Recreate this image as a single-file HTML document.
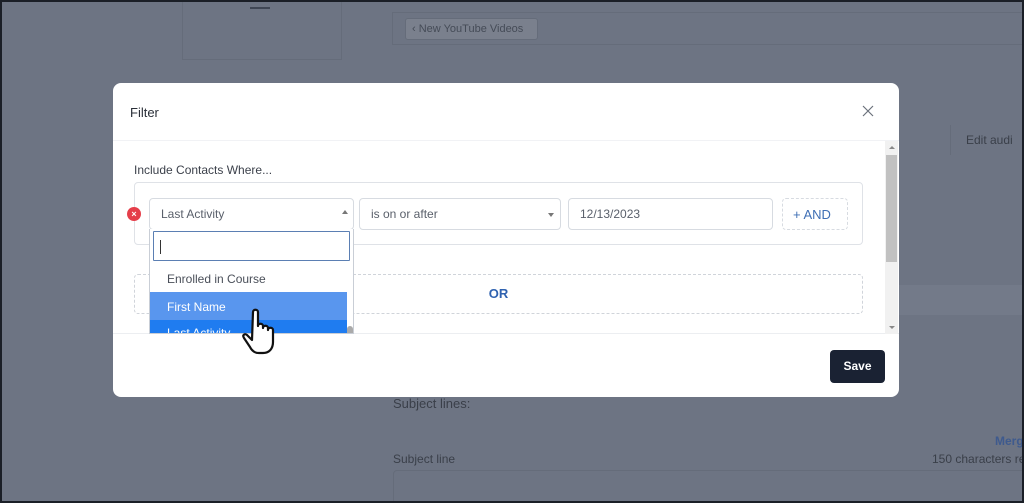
<!DOCTYPE html>
<html><head><style>
*{box-sizing:border-box;margin:0;padding:0}
html,body{width:1024px;height:503px;overflow:hidden}
body{background:#6d7483;font-family:"Liberation Sans",sans-serif;position:relative}
.frame{position:absolute;left:0;top:0;width:1024px;height:503px;border:2px solid #1b1f27;z-index:10;pointer-events:none}
.a{position:absolute;white-space:nowrap}
.t{position:absolute;color:#3a3f49;font-size:13px;white-space:nowrap}
.modal{position:absolute;left:113px;top:83px;width:786px;height:314px;background:#fff;border-radius:8px;overflow:hidden}
.in{position:absolute;border:1px solid #d7dbe1;border-radius:4px;background:#fff;font-size:12px;color:#5a606b;padding-left:11px;display:flex;align-items:center}
</style></head><body>
<div class="frame"></div>
<div class="a" style="left:182px;top:0;width:160px;height:60px;border:1px solid #656c7a;border-top:none"></div>
<div class="a" style="left:250px;top:7px;width:20px;height:2px;background:#3f4654"></div>
<div class="a" style="left:392px;top:12px;width:640px;height:33px;border:1px solid #656c7a"></div>
<div class="a" style="left:405px;top:18px;width:133px;height:22px;background:#7a808d;border:1px solid #656c7a;border-radius:3px;color:#454b57;font-size:11px;padding:4px 6px">‹ New YouTube Videos</div>
<div class="a" style="left:950px;top:125px;width:80px;height:30px;border-left:1px solid #656c7a;color:#3a3f49;font-size:12px;padding:8px 15px">Edit audi</div>
<div class="a" style="left:899px;top:285px;width:130px;height:30px;background:#737a89"></div>
<div class="t" style="left:393px;top:396px">Subject lines:</div>
<div class="t" style="left:393px;top:452px;font-size:12px">Subject line</div>
<div class="t" style="left:932px;top:452px;font-size:12px">150 characters re</div>
<div class="t" style="left:995px;top:434px;font-size:12px;color:#3e5a8e;font-weight:bold">Merg</div>
<div class="a" style="left:393px;top:470px;width:640px;height:40px;border:1px solid #656c7a;border-radius:4px"></div>

<div class="modal">
  <div class="a" style="left:17px;top:22px;font-size:13px;color:#2a2f38">Filter</div>
  <svg class="a" style="left:749px;top:22px" width="12" height="12" viewBox="0 0 12 12"><path d="M1 1L11 11M11 1L1 11" stroke="#6b717c" stroke-width="1.2"/></svg>
  <div class="a" style="left:0;top:57px;width:786px;height:194px;background:#fff;border-top:1px solid #f1f2f5;border-bottom:1px solid #eceef1"></div>
  <div class="a" style="left:772px;top:58px;width:13px;height:193px;background:#f1f1f1"></div>
  <div class="a" style="left:773px;top:72px;width:11px;height:107px;background:#c1c1c1"></div>
  <div class="a" style="left:776px;top:63px;border:3px solid transparent;border-bottom-color:#888;border-top:none"></div>
  <div class="a" style="left:776px;top:243px;border:3px solid transparent;border-top-color:#888;border-bottom:none"></div>
  <div class="a" style="left:21px;top:80px;font-size:12px;color:#3c414b">Include Contacts Where...</div>
  <div class="a" style="left:21px;top:99px;width:729px;height:63px;border:1px solid #dfe2e7;border-radius:4px"></div>
  <div class="a" style="left:14px;top:124px;width:14px;height:14px;border-radius:50%;background:#e53e4a;color:#fff;font-size:9px;line-height:14px;text-align:center;font-weight:bold">×</div>
  <div class="in" style="left:36px;top:115px;width:205px;height:32px">Last Activity<span style="position:absolute;right:5px;top:11px;border:3px solid transparent;border-bottom:4px solid #777;border-top:none"></span></div>
  <div class="in" style="left:246px;top:115px;width:202px;height:32px">is on or after<span style="position:absolute;right:6px;top:14px;border:3px solid transparent;border-top:4px solid #777;border-bottom:none"></span></div>
  <div class="in" style="left:455px;top:115px;width:205px;height:32px">12/13/2023</div>
  <div class="in" style="left:669px;top:115px;width:66px;height:32px;border-style:dashed;color:#3f6fb5;font-size:13px;padding-left:10px">+ AND</div>
  <div class="a" style="left:21px;top:191px;width:729px;height:40px;border:1px dashed #d0d4da;border-radius:4px;text-align:center;line-height:38px;color:#2f62b0;font-weight:bold;font-size:13px">OR</div>
  <div class="a" style="left:36px;top:146px;width:205px;height:105px;background:#fff;border:1px solid #c9ced6;border-top:none;overflow:hidden">
    <div class="a" style="left:3px;top:2px;width:197px;height:30px;border:1px solid #5b7fb3;border-radius:1px"><div style="position:absolute;left:6px;top:8px;width:1px;height:14px;background:#333"></div></div>
    <div class="a" style="left:17px;top:43px;font-size:12px;color:#4a4f59">Enrolled in Course</div>
    <div class="a" style="left:0;top:63px;width:197px;height:28px;background:#5996ee;color:#fff;font-size:12px;padding:8px 17px">First Name</div>
    <div class="a" style="left:0;top:91px;width:197px;height:20px;background:#1f7cf0;color:#fff;font-size:12px;padding:6px 17px">Last Activity</div>
    <div class="a" style="left:197px;top:97px;width:6px;height:10px;background:#aaa;border-radius:3px"></div>
  </div>
  <div class="a" style="left:717px;top:267px;width:55px;height:33px;background:#1a2233;border-radius:4px;color:#fff;font-weight:bold;font-size:12px;text-align:center;line-height:33px">Save</div>
</div>
<svg class="a" style="left:242px;top:308px" width="42" height="48" viewBox="0 0 42 48"><path d="M11 4c0-3 5-3 5 0v14c0-3 5-3 5 0v2c0-3 5-3 5 0v2c0-3 5-3 5 0v12c0 7-4 11-10 11h-4c-4 0-7-2-9-6l-6-9c-2-3 1-5 3-3l5 5z" fill="#fff" stroke="#111" stroke-width="2.2" stroke-linejoin="round"/></svg>
</body></html>
